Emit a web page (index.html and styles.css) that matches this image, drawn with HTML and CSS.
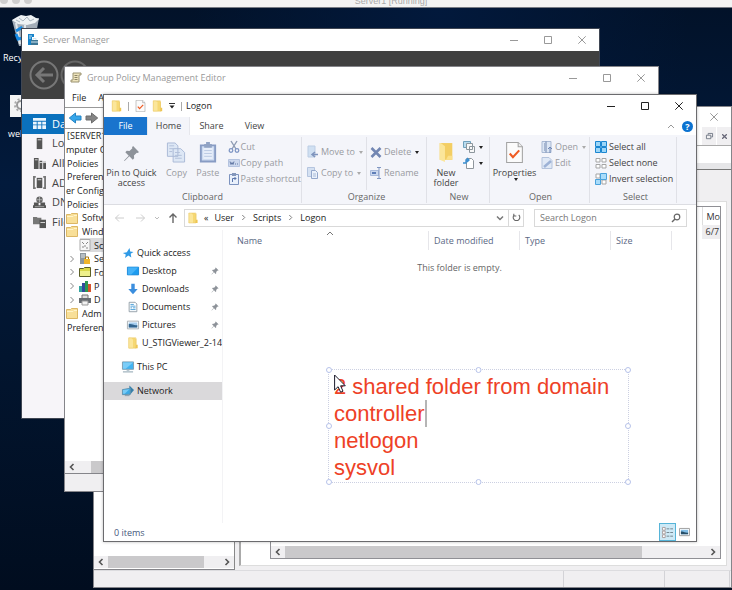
FILE: index.html
```html
<!DOCTYPE html>
<html lang="en">
<head>
<meta charset="utf-8">
<title>Server1 [Running]</title>
<link rel="stylesheet" href="styles.css">
</head>
<body>
<svg class="defs" aria-hidden="true">
  <symbol id="folder" viewBox="0 0 12 14"><path d="M1 1h8v1h1v11H1z" fill="#f6d873"/><path d="M1 1h3l2 2v10H1z" fill="#fbe69a"/><path d="M9.500 9h2v4H9z" fill="#efc64f"/><path d="M1 1h8.500v12H1z" fill="none" stroke="#e9c766" stroke-width=".6"/></symbol>
  <symbol id="bigfolder" viewBox="0 0 14 20"><path d="M1 1h12v16H1z" fill="#f3ce63"/><path d="M1 1h1l4 3v15l-5-2z" fill="#fbe69a"/><path d="M9 13h4v4H7z" fill="#fbe08a"/></symbol>
  <symbol id="dir" viewBox="0 0 12 12"><path d="M.5 2.500h4l1-1h6v10H.5z" fill="#f8df98" stroke="#dcb765"/><path d="M1 4.500h6l1-1h3" stroke="#fff3c9" fill="none"/></symbol>
  <symbol id="pin" viewBox="0 0 16 16"><path d="M9.500 1 15 6.500l-1 1-1-.3-2.700 2.700.2 2.600-1.300 1.300-3.200-3.200L1.500 15 1 14.500l4.400-4.500-3.200-3.200 1.300-1.300 2.600.2L8.800 3l-.3-1z" fill="#8d9299"/></symbol>
  <symbol id="min" viewBox="0 0 8 8"><path d="M0 4.500h8" stroke="currentColor"/></symbol>
  <symbol id="max" viewBox="0 0 8 8"><path d="M.5.5h7v7h-7z" fill="none" stroke="currentColor"/></symbol>
  <symbol id="close" viewBox="0 0 8 8"><path d="m.3.3 7.400 7.400M7.700.3.3 7.700" stroke="currentColor" fill="none"/></symbol>
  <symbol id="left" viewBox="0 0 6 8"><path d="M4.500 1 1.500 4l3 3" stroke="currentColor" stroke-width="1.600" fill="none"/></symbol>
  <symbol id="right" viewBox="0 0 6 8"><path d="m1.500 1 3 3-3 3" stroke="currentColor" stroke-width="1.600" fill="none"/></symbol>
  <symbol id="thin" viewBox="0 0 6 8"><path d="m1.500 1 3 3-3 3" stroke="currentColor" fill="none"/></symbol>
  <symbol id="check" viewBox="0 0 16 20"><path d="M.5.500h11l4 4v15H.5z" fill="#fbfbfb" stroke="#a3a3a3"/><path d="M11.500.5v4h4" fill="#eee" stroke="#a3a3a3"/><path d="m3.500 11 3 3.500 6-6.500" fill="none" stroke="#ef5b22" stroke-width="2"/></symbol>
</svg>

<header class="host-bar"><i></i><i></i><i></i><span>Server1 [Running]</span></header>

<main class="desktop">
  <div class="shortcut recycle">
    <svg viewBox="0 0 30 32"><path d="M1 6 28 4l-5 27-15 1z" fill="#bfc9d1" opacity=".85"/><path d="m1 6 5-3 4-2 5 1 5-1 5 3 3 1-4 4-8 2-9-1z" fill="#eef2f4"/><path d="m8 4 4 3 4-4 3 4 4-2M5 6l4 2" stroke="#aab6bf" fill="none"/><path d="m5 9 4 21M14 11v19" stroke="#e1e8ec" stroke-width="2"/><path d="m5 17 5-3 3 4M5 20l2 5 5-1" stroke="#1688e0" stroke-width="3" fill="none"/></svg>
    <span>Recy</span>
  </div>
  <div class="shortcut web">
    <svg viewBox="0 0 22 24"><path d="M0 1h22v22H0z" fill="#f4f4f4"/><circle cx="11" cy="11" r="4" fill="none" stroke="#999" stroke-width="2"/><circle cx="11" cy="11" r="6" fill="none" stroke="#aaa" stroke-width="2" stroke-dasharray="2 2"/></svg>
    <span>wel</span>
  </div>
  <p class="watermark">Windows Server 2016 Standard</p>

  <section class="window console">
    <div class="caption">
      <button aria-label="Close"><svg><use href="#close"/></svg></button>
    </div>
    <div class="mdi">
      <button aria-label="Restore"><svg viewBox="0 0 8 8"><path d="M2.500 2V.5h5v4H6M.5 2.500h5v4h-5z" fill="none" stroke="#6c7480"/></svg></button>
      <button aria-label="Close view"><svg class="bold"><use href="#close"/></svg></button>
    </div>
    <div class="console-tools"></div>
    <div class="console-body">
      <div class="console-tree"><div class="hscroll"><svg><use href="#left"/></svg><b></b><svg><use href="#right"/></svg></div></div>
      <div class="console-pane">
        <div class="console-list">
          <table><thead><tr><th>Mo</th></tr></thead><tbody><tr><td>6/7</td></tr></tbody></table>
          <div class="hscroll wide"><svg><use href="#left"/></svg><b></b><svg><use href="#right"/></svg></div>
        </div>
      </div>
    </div>
    <div class="console-status"><i></i><i></i><i></i></div>
  </section>

  <section class="window server">
    <div class="titlebar">
      <svg class="app-icon" viewBox="0 0 12 12"><path d="M1 0h6v3H5v8H1z" fill="#1783c9"/><path d="M2 2h3M2 4h2" stroke="#bfe1f5"/><path d="M4 6h7v5H4z" fill="#3d7796"/><path d="M6 6V4.500h3V6M4 8h7" stroke="#cfe4ef" fill="none"/></svg>
      <h2>Server Manager</h2>
      <div class="controls"><button aria-label="Minimize"><svg><use href="#min"/></svg></button><button aria-label="Maximize"><svg><use href="#max"/></svg></button><button aria-label="Close"><svg><use href="#close"/></svg></button></div>
    </div>
    <div class="server-head">
      <svg class="round" viewBox="0 0 30 30"><circle cx="15" cy="15" r="13.500" fill="none" stroke="#777" stroke-width="2"/><path d="M24 15H8m7-7-7 7 7 7" fill="none" stroke="#777" stroke-width="3"/></svg>
      <svg class="round" viewBox="0 0 30 30"><circle cx="15" cy="15" r="13.500" fill="none" stroke="#666" stroke-width="2"/></svg>
      <svg class="flags" viewBox="0 0 60 20"><circle cx="8" cy="7" r="6" fill="none" stroke="#aaa" stroke-width="2"/><path d="M44 0v20M44 2h11l-2 4 2 4H44" fill="#c4c4c4" stroke="#c4c4c4"/></svg>
    </div>
    <nav class="server-nav">
      <a href="#" class="on"><svg viewBox="0 0 14 14"><path d="M0 1h14v3H0zM0 5h4v3H0zm5 0h4v3H5zm5 0h4v3h-4zM0 9h4v4H0zm5 0h4v4H5zm5 0h4v4h-4z" fill="#eaf5fd"/></svg>Da</a>
      <a href="#"><svg viewBox="0 0 14 14"><path d="M4 1h6v12H4z" fill="#555"/><path d="M5 3h4" stroke="#ddd"/></svg>Lo</a>
      <a href="#"><svg viewBox="0 0 14 14"><path d="M1 1h5v12H1zM7 4h3v9H7zM11 5h3v8h-3z" fill="#555"/><path d="M2 3h3M7 6h7" stroke="#ddd"/></svg>All</a>
      <a href="#"><svg viewBox="0 0 14 14"><path d="M4 2h6v11H4z" fill="#555"/><path d="M3 1H1v12h2M11 1h2v12h-2" stroke="#777" stroke-width="2" fill="none"/><path d="M5 4h4" stroke="#ddd"/></svg>AD</a>
      <a href="#"><svg viewBox="0 0 14 14"><circle cx="7" cy="4" r="3.500" fill="#666"/><path d="M1 7h5v3H1zM8 7h5v3H8zM0 10h14v3H0z" fill="#555"/><path d="M4 4h6M7 1v6M2 11.500h10" stroke="#ccc" stroke-width=".7"/></svg>DN</a>
      <a href="#"><svg viewBox="0 0 14 14"><path d="M0 1h4l1 1h4v7H0z" fill="#777"/><path d="M7 4h7v9H7z" fill="#555"/><path d="M8 7h5" stroke="#ddd"/></svg>File</a>
    </nav>
  </section>

  <section class="window policy">
    <div class="titlebar">
      <svg class="app-icon" viewBox="0 0 12 12"><path d="M3 1h8v2H9v7H1V8h2z" fill="#eee4bd" stroke="#9a9270"/><path d="M4.500 3.500h3m-3 2h3m-3 2h3" stroke="#8c8569"/></svg>
      <h2>Group Policy Management Editor</h2>
      <div class="controls"><button aria-label="Minimize"><svg><use href="#min"/></svg></button><button aria-label="Maximize"><svg><use href="#max"/></svg></button><button aria-label="Close"><svg><use href="#close"/></svg></button></div>
    </div>
    <div class="menu"><button>File</button><button>A</button></div>
    <div class="policy-tools">
      <button aria-label="Back"><svg viewBox="0 0 13 12"><path d="M12.500 4v4H7v3L.8 6 7 1v3z" fill="#36a6ea" stroke="#2584c4"/></svg></button>
      <button aria-label="Forward"><svg viewBox="0 0 13 12"><path d="M.5 4v4H6v3l6.200-5L6 1v3z" fill="#858585" stroke="#6d6d6d"/></svg></button>
    </div>
    <ul class="tree">
      <li>[SERVER1</li>
      <li class="cut">mputer C</li>
      <li>Policies</li>
      <li>Preferen</li>
      <li class="cut">er Config</li>
      <li>Policies</li>
      <li class="dir"><svg><use href="#dir"/></svg>Softw</li>
      <li class="dir"><svg><use href="#dir"/></svg>Wind</li>
      <li class="leaf sel"><svg viewBox="0 0 12 12"><path d="M1 .5h10v11H1z" fill="#f6f6f6" stroke="#aaa"/><path d="m3 3 2 2m4-2L7 5M3 8h2m2 1h2M5 7h2" stroke="#888"/></svg>Sc</li>
      <li class="leaf"><svg class="tw"><use href="#thin"/></svg><svg viewBox="0 0 12 12"><path d="M1 0h6v11H1z" fill="#8d979e"/><path d="M2 2h4M2 4h4" stroke="#dde3e7"/><path d="M5 6h6v5H5z" fill="#efb52b"/><path d="M6.500 6V4h3v2" fill="none" stroke="#a87a14"/></svg>Se</li>
      <li class="leaf"><svg class="tw"><use href="#thin"/></svg><svg viewBox="0 0 12 12"><path d="M.5 2.500h4l1-1h6v9H.5z" fill="#d9d84a" stroke="#5b5f26"/><path d="M1 5h10v5H1z" fill="#eef08a"/></svg>Fo</li>
      <li class="leaf"><svg class="tw"><use href="#thin"/></svg><svg viewBox="0 0 12 12"><path d="M0 6h3v6H0z" fill="#33a4a0"/><path d="M3 3h3v9H3z" fill="#334a9c"/><path d="M6 1h3v11H6z" fill="#2b9952"/><path d="M9 4h3v8H9z" fill="#d6542f"/></svg>P</li>
      <li class="leaf"><svg class="tw"><use href="#thin"/></svg><svg viewBox="0 0 12 12"><path d="M3 1h6v4H3z" fill="#ddd" stroke="#777"/><path d="M0 4h12v5H0z" fill="#686d72"/><path d="M3 7h6v4H3z" fill="#f2f2f2" stroke="#999"/></svg>D</li>
      <li class="dir"><svg><use href="#dir"/></svg>Adm</li>
      <li>Preferen</li>
    </ul>
    <div class="hscroll"><svg><use href="#left"/></svg><b></b></div>
    <div class="policy-status"></div>
  </section>

  <section class="window explorer">
    <div class="titlebar">
      <div class="quick">
        <svg class="f"><use href="#folder"/></svg><i></i><svg class="f"><use href="#check"/></svg><svg class="f"><use href="#folder"/></svg>
        <svg class="dd" viewBox="0 0 6 6"><path d="M0 .5h6" stroke="#333"/><path d="M.5 2.500h5L3 5.500z" fill="#222"/></svg><i></i>
      </div>
      <h1>Logon</h1>
      <div class="controls"><button aria-label="Minimize"><svg><use href="#min"/></svg></button><button aria-label="Maximize"><svg><use href="#max"/></svg></button><button aria-label="Close"><svg><use href="#close"/></svg></button></div>
    </div>
    <div class="tabs">
      <button class="file">File</button><button class="on">Home</button><button>Share</button><button>View</button>
      <svg class="up" viewBox="0 0 8 6"><path d="m1 5 3-3 3 3" fill="none" stroke="#999"/></svg>
      <button class="help" aria-label="Help">?</button>
    </div>
    <div class="ribbon">
      <div class="group clip">
        <div class="tools">
          <button class="big pinned"><svg><use href="#pin"/></svg>Pin to Quick access</button>
          <button class="big off narrow"><svg viewBox="0 0 20 22"><path d="M1 1h8l3 3v11H1zM7 7h8l4 4v10H7z" fill="#dde7f5" stroke="#a9b9d6"/><path d="M3 4h5M3 7h4M3 10h3M9 11h5M9 14h7M9 17h7" stroke="#b1bfd9"/></svg>Copy</button>
          <button class="big off narrow"><svg viewBox="0 0 18 22"><path d="M1.500 3.500h15v17h-15z" fill="#ccdaf0" stroke="#889cc4" stroke-width="2"/><path d="M4 6h10v12H4z" fill="#e8effa"/><path d="M5 2h2V0h4v2h2v4H5z" fill="#91a3c4"/><path d="M5 9h8M5 12h8M5 15h8" stroke="#b9c8e2"/></svg>Paste</button>
          <div class="col">
            <button class="off"><svg viewBox="0 0 12 12"><path d="m3 0 5 8M9 0 4 8" stroke="#8e9bb3" stroke-width="1.400"/><circle cx="3" cy="9.500" r="1.800" fill="none" stroke="#7f96c4" stroke-width="1.300"/><circle cx="9" cy="9.500" r="1.800" fill="none" stroke="#7f96c4" stroke-width="1.300"/></svg>Cut</button>
            <button class="off"><svg viewBox="0 0 12 12"><path d="M.5 2.500h11v7H.5z" fill="#ccd8ee" stroke="#b4c3df"/><path d="m2 4.500 1 3 1-2 1 2 1-3M7 7h1m1 0h1" stroke="#6379a5" fill="none"/></svg>Copy path</button>
            <button class="off"><svg viewBox="0 0 12 12"><path d="M1.500 1.500h9v10h-9z" fill="#e9f0fb" stroke="#7d93bf"/><path d="M4 0h4v3H4z" fill="#8296bb"/><path d="M4.500 9V5.500H8M6.500 4 8 5.500 6.500 7" stroke="#5a75ab" fill="none"/></svg>Paste shortcut</button>
          </div>
        </div>
        <span class="label">Clipboard</span>
      </div>
      <div class="group org">
        <div class="tools">
          <div class="col two">
            <button class="off"><svg viewBox="0 0 12 12"><path d="M1 0h7v11H1z" fill="#d0e0f2" stroke="#bccde4"/><path d="M5 8.500h6M8 6 5 8.500 8 11" stroke="#7f94bd" stroke-width="1.500" fill="none"/></svg>Move to<em></em></button>
            <button class="off"><svg viewBox="0 0 12 12"><path d="M.5.5h7v9h-7z" fill="#d5e1f2" stroke="#b5c5df"/><path d="M4.500 3.500h4l2 2v6h-6z" fill="#eaf1fb" stroke="#94a7cb"/><path d="M6 7h3M6 9h3" stroke="#a9b9d6"/></svg>Copy to<em></em></button>
          </div>
          <div class="col two last">
            <button class="off"><svg viewBox="0 0 12 12"><path d="m1.500 2 9 9m0-9-9 9" stroke="#7387b3" stroke-width="2.600"/></svg>Delete<em class="dark"></em></button>
            <button class="off"><svg viewBox="0 0 12 12"><path d="M.5 3.500h8v5h-8z" fill="#cbd8ee" stroke="#a9badb"/><path d="M2 6h4" stroke="#5e7db7" stroke-width="2"/><path d="M7 .5h4m-2 0v11m-2 0h4" stroke="#8197c2"/></svg>Rename</button>
          </div>
        </div>
        <span class="label">Organize</span>
      </div>
      <div class="group new">
        <div class="tools">
          <button class="big"><svg><use href="#bigfolder"/></svg>New folder</button>
          <div class="col">
            <button aria-label="New item"><svg viewBox="0 0 12 12"><path d="M.5.5h7v6h-7z" fill="#b9dcef" stroke="#6fa0bc"/><path d="M3.500 2.500h6v6h-6zM6.500 5.500h5v6h-5z" fill="#f8f8f8" stroke="#8c969d"/></svg><em class="dark"></em></button>
            <button aria-label="Easy access"><svg viewBox="0 0 12 12"><path d="M3.500 1.500h5l2 2v8h-7z" fill="#fff" stroke="#8f969c"/><path d="M0 6h3V3h3M4 1l2 2-2 2" stroke="#3a8ed0" stroke-width="1.400" fill="none"/></svg><em class="dark"></em></button>
          </div>
        </div>
        <span class="label">New</span>
      </div>
      <div class="group open">
        <div class="tools">
          <button class="big"><svg><use href="#check"/></svg>Properties<em class="dark"></em></button>
          <div class="col">
            <button class="off"><svg viewBox="0 0 12 12"><path d="M1 .5h9v11H1z" fill="#dce6f4" stroke="#a9b9d3"/><path d="M3 3h1m-1 2h1m-1 2h1m-1 2h1M5 .5v11" stroke="#7086ae"/><path d="M9 12V6M7 8l2-2 2 2" stroke="#6f87b5" fill="none"/></svg>Open<em></em></button>
            <button class="off"><svg viewBox="0 0 12 12"><path d="M1 .5h7l3 3v8H1z" fill="#e0e9f6" stroke="#b4c3dc"/><path d="m3 10 7-6" stroke="#9db2d6" stroke-width="2.500"/></svg>Edit</button>
          </div>
        </div>
        <span class="label">Open</span>
      </div>
      <div class="group select">
        <div class="tools"><div class="col">
          <button><svg viewBox="0 0 12 12"><path d="M.5.5h5v5h-5zm6 0h5v5h-5zm-6 6h5v5h-5zm6 0h5v5h-5z" fill="#9cd6f8" stroke="#1b86d0"/></svg>Select all</button>
          <button><svg viewBox="0 0 12 12"><path d="M1 1.500h4v3.500H1zm6 0h4v3.500H7zM1 7.500h4V11H1zm6 0h4V11H7z" fill="#fff" stroke="#a5a5a5"/></svg>Select none</button>
          <button><svg viewBox="0 0 12 12"><path d="M1 1h4v4H1zm6 6h4v4H7z" fill="#fff" stroke="#a5a5a5"/><path d="M5.500.5h6v6h-6zm-5 6h5v5h-5z" fill="#a9dcfa" stroke="#4ba3dc"/></svg>Invert selection</button>
        </div></div>
        <span class="label">Select</span>
      </div>
    </div>

    <div class="address">
      <div class="arrows">
        <svg viewBox="0 0 10 10"><path d="M10 5H1.500M5 1.500 1.500 5 5 8.500" fill="none" stroke="#ccc"/></svg>
        <svg viewBox="0 0 10 10"><path d="M0 5h8.500M5 1.500 8.500 5 5 8.500" fill="none" stroke="#ccc"/></svg>
        <svg class="s" viewBox="0 0 6 10"><path d="m1 4 2 2 2-2" fill="none" stroke="#bbb"/></svg>
        <svg viewBox="0 0 10 10"><path d="M5 10V1M1.500 4.500 5 1l3.500 3.500" fill="none" stroke="#666" stroke-width="1.400"/></svg>
      </div>
      <div class="path">
        <svg class="f"><use href="#folder"/></svg><span>«</span><a href="#">User</a><svg class="sep"><use href="#thin"/></svg><a href="#">Scripts</a><svg class="sep"><use href="#thin"/></svg><a href="#">Logon</a>
        <svg class="drop" viewBox="0 0 8 8"><path d="m1 2.500 3 3 3-3" fill="none" stroke="#777" stroke-width="1.500"/></svg>
        <button aria-label="Refresh"><svg viewBox="0 0 10 10"><path d="M7.500 2a3.700 3.700 0 1 1-5 0M2 .8v2.500h2.800" fill="none" stroke="#666" stroke-width="1.200"/></svg></button>
      </div>
      <label class="search"><input type="text" placeholder="Search Logon" aria-label="Search Logon"><svg viewBox="0 0 10 10"><circle cx="6" cy="4" r="2.800" fill="none" stroke="#666" stroke-width="1.200"/><path d="M4 6 1 9" stroke="#666" stroke-width="1.500"/></svg></label>
    </div>

    <div class="body">
      <nav class="places">
        <a href="#"><svg viewBox="0 0 12 12"><path d="m7.500 1 .7 3.500 3.300.5-2.800 1.800.6 3.700-3-2L3 11l.8-3.500L.8 6l4-.8z" fill="#2f9ae6"/></svg>Quick access</a>
        <a href="#" class="sub"><svg viewBox="0 0 14 12"><path d="M.5 1.500h13v9H.5z" fill="#1d9cf0" stroke="#1183d6"/><path d="M1 2h12L5 10H1z" fill="#45b2f8"/></svg>Desktop<svg class="pin"><use href="#pin"/></svg></a>
        <a href="#" class="sub"><svg viewBox="0 0 14 12"><path d="M5 0h4v6h3.500L7 12 1.500 6H5z" fill="#3b8ede"/></svg>Downloads<svg class="pin"><use href="#pin"/></svg></a>
        <a href="#" class="sub"><svg viewBox="0 0 14 12"><path d="M2.500.5h7l2 2v9h-9z" fill="#fff" stroke="#8997a2"/><path d="M4 3h4M4 5h6M4 7h2m1 0h3M4 9h6" stroke="#3b96d4"/></svg>Documents<svg class="pin"><use href="#pin"/></svg></a>
        <a href="#" class="sub"><svg viewBox="0 0 14 12"><path d="M.5 1.500h13v9H.5z" fill="#fff" stroke="#a0a8ae"/><path d="M2 3h10v6H2z" fill="#a5cdee"/><path d="M2 5c4-1 6 2 10 1v3H2z" fill="#33658f"/></svg>Pictures<svg class="pin"><use href="#pin"/></svg></a>
        <a href="#" class="sub"><svg><use href="#folder"/></svg>U_STIGViewer_2-14</a>
        <a href="#" class="root"><svg viewBox="0 0 13 12"><path d="M.5.5h12v8H.5z" fill="#42b3f1" stroke="#7f9caf"/><path d="M1 1h11L4 8H1z" fill="#7bcdf8"/><path d="M5 9h3v1H5zM1 10.500h11v1.500H1z" fill="#a3b5c0"/></svg>This PC</a>
        <a href="#" class="root on"><svg viewBox="0 0 13 12"><path d="M8 0l5 5-5 6z" fill="#377fa8"/><path d="M.5 4.500 9 3v6.500L.5 10z" fill="#3ba9e5" stroke="#6291ad"/><path d="m1 5 7-1-5 5H1z" fill="#77caf5"/><path d="M3 11h5" stroke="#8199a8"/></svg>Network</a>
      </nav>
      <div class="files">
        <div class="heads"><button class="name">Name<svg viewBox="0 0 8 5"><path d="m1 4 3-3 3 3" fill="none" stroke="#777"/></svg></button><button>Date modified</button><button>Type</button><button class="size">Size</button></div>
        <p>This folder is empty.</p>
      </div>
    </div>
    <footer class="status">
      <span>0 items</span>
      <button class="on" aria-label="Details"><svg viewBox="0 0 14 12"><path d="M1.500.500h3v3h-3zm0 4h3v3h-3zm0 4h3v3h-3z" fill="#fff" stroke="#a79b9b"/><path d="M6 2h3m1 0h3M6 6h3m1 0h3M6 10h3m1 0h3" stroke="#6d7f88"/></svg></button>
      <button aria-label="Large icons"><svg viewBox="0 0 12 10"><path d="M.5.500h11v8H.5z" fill="#fff" stroke="#999"/><path d="M2 2h8v5H2z" fill="#81bde6"/><path d="M2 4c3-1 5 2 8 1v2H2z" fill="#274e68"/></svg></button>
    </footer>
  </section>

  <div class="note">
    <textarea aria-label="Note" spellcheck="false">2 shared folder from domain controller
netlogon
sysvol</textarea>
    <i class="caret"></i>
    <svg class="handles" width="100%" height="100%"><g fill="#fff" stroke="#b7c3ea"><circle cx="0" cy="0" r="2.500"/><circle cx="50%" cy="0" r="2.500"/><circle cx="100%" cy="0" r="2.500"/><circle cx="0" cy="50%" r="2.500"/><circle cx="100%" cy="50%" r="2.500"/><circle cx="0" cy="100%" r="2.500"/><circle cx="50%" cy="100%" r="2.500"/><circle cx="100%" cy="100%" r="2.500"/></g></svg>
    <svg class="cursor" viewBox="0 0 12 19"><path d="M.6 1v15l3.500-3.300 2.500 5.500 2.400-1-2.400-5.400h4.700z" fill="#fff" stroke="#1a1a2a"/></svg>
  </div>
</main>
</body>
</html>
```
FILE: styles.css
```css
* { box-sizing: border-box; }

body {
  margin: 0;
  height: 100vh;
  display: flex;
  flex-direction: column;
  overflow: hidden;
  font: 9px/12px "Open Sans", "Noto Sans", sans-serif;
  color: #222;
}

button {
  font: inherit;
  color: inherit;
  background: none;
  border: 0;
  padding: 0;
}

a { color: inherit; text-decoration: none; }
h1, h2, p, ul { margin: 0; padding: 0; font-size: 9px; font-weight: 400; }
svg { display: block; flex: none; overflow: visible; }
.defs { position: absolute; width: 0; height: 0; }

/* host machine's title strip */
.host-bar {
  height: 8px;
  flex: none;
  display: flex;
  gap: 4px;
  background: #f3f3f3;
  border-bottom: 1px solid #777b84;
  overflow: hidden;
  position: relative;
}
.host-bar i { width: 8px; height: 8px; border-radius: 50%; background: #cfcfcf; margin-top: -4px; }
.host-bar span {
  position: absolute;
  left: 0;
  right: 0;
  top: -5px;
  padding-left: 50px;
  text-align: center;
  color: #aaa;
  font-family: "Liberation Sans", sans-serif;
}

.desktop {
  flex: 1;
  position: relative;
  overflow: hidden;
  background:
    radial-gradient(ellipse at 60% 0, #02193c 0, transparent 40%),
    linear-gradient(#021229, #021a3c 30%, #02152f 60%, #010d1f);
}

.shortcut { position: absolute; color: #fff; }
.shortcut span { display: block; }
.shortcut.recycle { left: 3px; top: 6px; }
.shortcut.recycle svg { width: 30px; height: 32px; margin: 0 0 6px 8px; }
.shortcut.web { left: 8px; top: 86px; }
.shortcut.web svg { width: 22px; height: 24px; margin: 0 0 10px 2px; }

.watermark { position: absolute; right: 0; bottom: -9px; color: #ddd; font-size: 8px; }

/* windows on the desktop */
.window {
  position: absolute;
  display: flex;
  flex-direction: column;
  background: #fff;
  border: 1px solid #85858a;
  overflow: hidden;
}

.titlebar { display: flex; align-items: center; color: #999; }
.titlebar h2 { flex: 1; }
.app-icon { width: 12px; height: 12px; margin: 0 4px 0 5px; }
.controls { display: flex; }
.controls button { width: 34px; height: 20px; display: grid; place-items: center; }
.controls svg { width: 8px; height: 8px; }

.hscroll {
  display: flex;
  align-items: center;
  height: 12px;
  background: #f0eff1;
  color: #555;
  padding: 0 4px;
  gap: 4px;
}
.hscroll svg { width: 6px; height: 8px; }
.hscroll b { flex: 1; height: 12px; background: #cac9cb; }

/* server manager */
.server { left: 21px; right: 132px; top: 20px; bottom: 171px; border-color: #3f4653; background: #f7f5f9; }
.server .titlebar { height: 22px; background: #fff; }
.server-head {
  height: 48px;
  flex: none;
  display: flex;
  align-items: center;
  gap: 1px;
  padding: 0 185px 0 7px;
  background: #404040;
}
.round { width: 30px; height: 30px; }
.flags { width: 60px; height: 20px; margin: 22px 0 0 auto; }
.server-nav {
  height: 118px;
  margin-top: 15px;
  display: grid;
  grid-template-rows: repeat(6, 1fr);
  font-size: 11px;
  width: 120px;
  color: #444;
}
.server-nav a { display: flex; align-items: center; gap: 6px; padding-left: 11px; }
.server-nav .on { background: #0b71bd; color: #fff; }
.server-nav svg { width: 13px; height: 13px; }

/* policy editor */
.policy { left: 64px; right: 73px; top: 58px; bottom: 98px; }
.policy .titlebar { height: 22px; }
.policy .app-icon { margin-right: 5px; }
.menu { display: flex; gap: 12px; height: 18px; padding-left: 7px; }
.policy-tools { display: flex; gap: 3px; height: 22px; align-items: center; padding-left: 3px; border: solid #999; border-width: 1px 0; }
.policy-tools svg { width: 14px; height: 12px; }
.tree {
  list-style: none;
  height: 205px;
  display: grid;
  grid-template-rows: repeat(15, 1fr);
  line-height: 13px;
}
.tree li { display: flex; align-items: center; padding-left: 2px; white-space: nowrap; }
.tree .cut { padding-left: 1px; }
.tree .dir { padding-left: 1px; gap: 4px; }
.tree .leaf { gap: 3px; padding-left: 4px; }
.tree .sel::before { content: ""; width: 6px; margin-right: 1px; }
.tree .sel { background: linear-gradient(#dadadc, #dadadc) 15px 0 no-repeat; }
.tree svg { width: 12px; height: 12px; }
.tree .tw { width: 6px; height: 8px; color: #888; margin-right: 1px; }
.policy .hscroll { margin-top: auto; gap: 16px; }
.policy-status { height: 18px; flex: none; background: #f0eff1; border-top: 1px solid #85858a; }

/* management console behind */
.console { left: 93px; right: 0; top: 98px; bottom: 2px; background: #f0eff1; }
.caption { height: 20px; flex: none; background: #fff; display: flex; justify-content: flex-end; padding-right: 13px; align-items: center; color: #999; }
.caption svg { width: 8px; height: 8px; }
.mdi { height: 19px; flex: none; display: flex; justify-content: flex-end; background: #fff; border-bottom: 1px solid #aaa; }
.mdi button { width: 14px; display: grid; place-items: center; background: #f0eff1; margin-left: 1px; }
.mdi svg { width: 7px; height: 7px; color: #667; }
.mdi .bold { stroke-width: 2px; width: 5px; height: 5px; }
.console-tools { height: 23px; flex: none; background: #fff; border-bottom: 6px solid #e6e6e8; box-shadow: 0 1px #777; }
.console-body { flex: 1; min-height: 0; display: flex; gap: 4px; }
.console-tree { width: 141px; background: #fff; border-right: 1px solid #888; border-bottom: 1px solid #85858a; display: flex; flex-direction: column; justify-content: flex-end; padding-bottom: 1px; }
.console-pane { flex: 1; display: flex; margin: 32px 4px 4px 0; background: #fff; border: 1px solid #ddd; border-left: 2px solid #aaa; padding: 4px 5px 6px 29px; }
.console-list { flex: 1; display: flex; flex-direction: column; justify-content: space-between; border: 1px solid #909095; overflow: hidden; }
.console-list table { border-spacing: 0; align-self: flex-end; color: #333; }
.console-list th, .console-list td { font-weight: 400; height: 18px; padding: 2px 0 0 3px; border-left: 1px solid #ddd; }
.console-list td { background: #eeedef; height: 14px; padding-top: 0; border: 0; }
.console-status { height: 17px; flex: none; display: flex; justify-content: flex-end; border-top: 1px solid #dcdcdf; }
.console-status i { width: 65px; border-left: 1px solid #d3d3d7; }
.console-status i:first-child { width: 101px; }
.console-status i:last-child { width: 2px; }
.console-tree b { margin-right: 16px; }
.wide b { margin-right: 64px; }

/* file explorer */
.explorer { left: 103px; right: 35px; top: 86px; bottom: 48px; border-color: #6b6b6e; box-shadow: 0 0 3px #0004; }
.explorer .titlebar { height: 22px; flex: none; color: #222; }
.explorer h1 { flex: 1; }
.quick { display: flex; align-items: center; gap: 6px; padding: 0 4px 0 7px; }
.quick .f { width: 11px; height: 12px; }
.quick i { width: 1px; height: 9px; background: #aaa; }
.quick .dd { width: 6px; height: 6px; }

.tabs { height: 18px; flex: none; display: flex; align-items: center; padding-right: 3px; color: #444; }
.tabs button { width: 43px; height: 18px; }
.tabs .file { background: #1974cd; color: #fff; }
.tabs .on { background: #f4f5fa; border: solid #e6e7ec; border-width: 0 1px; }
.tabs .up { width: 8px; height: 6px; margin: 0 7px 0 auto; }
.tabs .help { width: 11px; height: 11px; border-radius: 50%; background: #0b72d0; color: #fff; font-weight: 700; line-height: 11px; }

.ribbon { height: 70px; flex: none; display: flex; background: #f4f5fa; border-bottom: 1px solid #dcdde2; color: #444; white-space: nowrap; }
.group { display: flex; flex-direction: column; border-right: 1px solid #e0e1e7; margin: 2px 0 1px; }
.label { text-align: center; color: #666; line-height: 13px; }
.tools { flex: 1; display: flex; gap: 4px; }
.big { display: flex; flex-direction: column; align-items: center; line-height: 10px; padding-top: 5px; white-space: normal; }
.big svg { width: 20px; height: 21px; margin-bottom: 5px; }
.big.pinned { width: 56px; }
.big.pinned svg { width: 17px; height: 17px; margin: 3px 0 6px; }
.col { display: flex; flex-direction: column; padding-top: 2px; }
.col button { display: flex; align-items: center; gap: 2px; height: 16px; }
.col svg { width: 12px; height: 12px; }
.off { color: #999ba1; }
em { border: solid transparent; border-width: 3px 2px 0; border-top-color: #aaa; margin-left: 2px; }
em.dark { border-top-color: #222; }
.narrow { width: 28px; }
.clip { width: 198px; }
.clip .col { padding-left: 2px; }
.clip .col button { gap: 1px; }
.org { width: 125px; padding-left: 5px; }
.two { padding-top: 7px; gap: 5px; }
.two.last { border-left: 1px solid #e0e1e7; padding-left: 3px; margin-left: -1px; }
.new { width: 63px; padding-left: 2px; }
.new .tools { gap: 0; }
.new .big { width: 34px; }
.open { width: 100px; padding-left: 2px; }
.open .big { width: 45px; }
.open .big svg { width: 17px; }
.select { width: 87px; padding-left: 5px; }

.address { height: 25px; flex: none; display: flex; align-items: center; gap: 10px; padding-right: 9px; }
.arrows { display: flex; gap: 12px; padding-left: 10px; }
.arrows svg { width: 10px; height: 10px; }
.arrows .s { width: 6px; margin: 0 -4px; }
.path { flex: 1; height: 18px; display: flex; align-items: center; gap: 6px; border: 1px solid #d9d9d9; padding-left: 3px; margin-left: -4px; }
.path .f { width: 10px; height: 12px; }
.path .sep { width: 5px; height: 7px; color: #666; margin: 0 1px; }
.path .drop { width: 8px; height: 8px; margin-left: auto; }
.path button { width: 15px; height: 16px; border-left: 1px solid #d9d9d9; display: grid; place-items: center; margin-left: -2px; }
.path button svg { width: 9px; height: 9px; }
.search { width: 153px; height: 18px; display: flex; align-items: center; border: 1px solid #d9d9d9; padding: 0 5px; }
.search input { flex: 1; min-width: 0; border: 0; padding: 0; font: inherit; background: none; }
.search input::placeholder { color: #777; opacity: 1; }
.search svg { width: 10px; height: 10px; }

.body { flex: 1; min-height: 0; display: flex; }
.places { width: 118px; flex: none; padding-top: 14px; }
.places a { height: 18px; display: flex; align-items: center; gap: 3px; padding-left: 18px; white-space: nowrap; }
.places .sub { padding-left: 23px; }
.places svg { width: 12px; height: 12px; }
.places .pin { width: 8px; height: 8px; margin: 0 3px 0 auto; }
.places .root { margin-top: 6px; padding-left: 18px; }
.places .on { background: #dad9db; }
.files { flex: 1; border-left: 1px solid #f3f3f5; display: flex; flex-direction: column; }
.heads { display: flex; height: 20px; padding: 1px 24px 0 0; color: #5a6884; }
.heads button { width: 91px; text-align: left; padding-left: 5px; border-right: 1px solid #e6e6ea; position: relative; }
.heads .name { flex: 1; padding-left: 14px; }
.heads .size { width: 61px; }
.heads svg { position: absolute; left: 50%; top: 0; width: 8px; height: 5px; }
.files p { text-align: center; padding-top: 12px; color: #666; }
.status { height: 18px; flex: none; display: flex; align-items: center; padding: 0 3px 0 10px; color: #46587c; }
.status span { flex: 1; padding-top: 2px; }
.status button { width: 17px; height: 18px; display: grid; place-items: center; }
.status .on { background: #cde9f6; border: 1px solid #56b4d8; }
.status svg { width: 13px; height: 11px; }
.status button:last-child svg { width: 11px; height: 9px; }

/* annotation laid over the screen */
.note { position: absolute; left: 328px; top: 361px; width: 301px; height: 114px; border: 1px dotted #ccd0e2; }
.note textarea {
  display: block;
  width: 100%;
  height: 100%;
  border: 0;
  padding: 3px 0 0 5px;
  background: none;
  resize: none;
  overflow: hidden;
  outline: 0;
  font: 22px/27px "Liberation Sans", Arial, sans-serif;
  color: #ee4126;
}
.caret { position: absolute; left: 96px; top: 30px; width: 2px; height: 27px; background: #b5b5b5; }
.handles { position: absolute; inset: 0; }
.cursor { position: absolute; left: 5px; top: 4px; width: 12px; height: 19px; }
```
